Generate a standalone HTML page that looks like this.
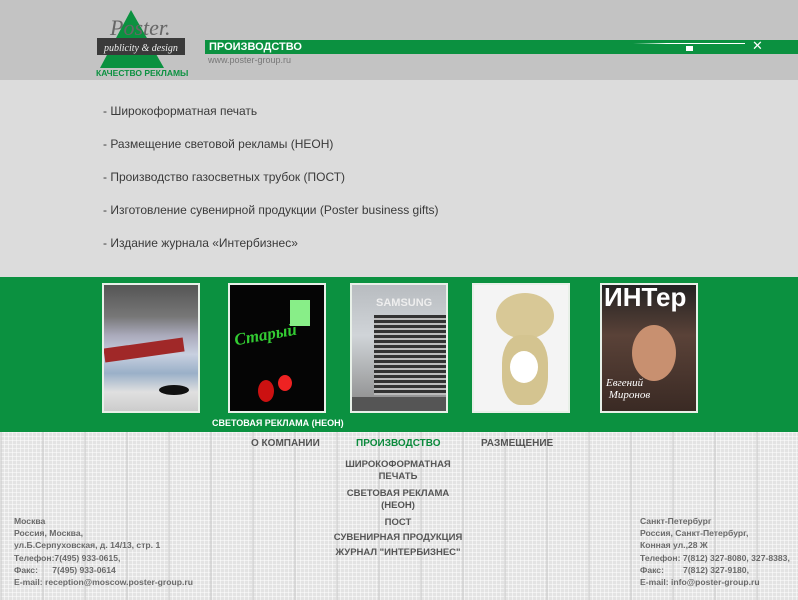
<!DOCTYPE html>
<html><head><meta charset="utf-8"><style>
*{margin:0;padding:0;box-sizing:border-box}
body{width:798px;height:600px;position:relative;overflow:hidden;background:#dcdcdc;font-family:"Liberation Sans",sans-serif}
.a{position:absolute}
#top{left:0;top:0;width:798px;height:80px;background:#c3c3c3}
#bar{left:205px;top:40px;width:593px;height:14px;background:#0b9140;color:#fff;font-weight:bold;font-size:11px;line-height:14px;padding-left:4px}
.list div{position:absolute;left:103px;font-size:12px;color:#3a3a3a}
#green{left:0;top:277px;width:798px;height:155px;background:#0b9140}
.ph{position:absolute;top:283px;width:98px;height:130px;border:2px solid #e8f0e8;overflow:hidden}
#bottom{left:0;top:432px;width:798px;height:168px;background-color:#e3e3e3;
background-image:linear-gradient(90deg,rgba(200,200,200,.5) 2px,transparent 2px),linear-gradient(90deg,rgba(255,255,255,.5) 1px,transparent 1px),linear-gradient(rgba(255,255,255,.5) 1px,transparent 1px);background-size:42px 42px,4px 4px,4px 4px}
.menu{font-weight:bold;font-size:10px;color:#555}
.sub{position:absolute;left:330px;width:136px;text-align:center;font-weight:bold;font-size:9.5px;color:#555;line-height:12px}
.addr{font-weight:bold;font-size:8.6px;color:#6a6a6a;line-height:12.2px}
</style></head><body>
<div class="a" id="top"></div>
<svg class="a" style="left:92px;top:8px" width="100" height="62">
<polygon points="39,2 8,60 72,60" fill="#0b9140"/>
<rect x="5" y="30" width="88" height="17" fill="#3a3a3a"/>
<text x="18" y="27" font-family="Liberation Serif" font-style="italic" font-size="22" fill="#666">Poster.</text>
<text x="12" y="43" font-family="Liberation Serif" font-style="italic" font-size="10" fill="#eee">publicity &amp; design</text>
</svg>
<div class="a" style="left:96px;top:68px;font-size:8.5px;font-weight:bold;color:#0b9140">КАЧЕСТВО РЕКЛАМЫ</div>
<div class="a" id="bar">ПРОИЗВОДСТВО</div>
<div class="a" style="left:633px;top:43px;width:112px;height:1px;background:linear-gradient(90deg,transparent,#fff 30%)"></div>
<div class="a" style="left:686px;top:46px;width:7px;height:5px;background:#fff"></div>
<div class="a" style="left:752px;top:38px;color:#fff;font-size:13px">✕</div>
<div class="a" style="left:208px;top:55px;font-size:9px;color:#777">www.poster-group.ru</div>
<div class="list">
<div style="top:104px">- Широкоформатная печать</div>
<div style="top:137px">- Размещение световой рекламы (НЕОН)</div>
<div style="top:170px">- Производство газосветных трубок (ПОСТ)</div>
<div style="top:203px">- Изготовление сувенирной продукции (Poster business gifts)</div>
<div style="top:236px">- Издание журнала «Интербизнес»</div>
</div>
<div class="a" id="green"></div>
<div class="ph" style="left:102px;background:linear-gradient(#555 0,#777 25%,#aab 40%,#c8d0e0 55%,#9ab0c8 70%,#e0e0e0 85%,#ccc)">
<div class="a" style="left:0;top:58px;width:80px;height:14px;background:#a02828;transform:rotate(-8deg)"></div>
<div class="a" style="left:55px;top:100px;width:30px;height:10px;border-radius:50%;background:#111"></div></div>
<div class="ph" style="left:228px;background:#050505">
<div class="a" style="left:4px;top:40px;color:#3c3;font-family:'Liberation Serif';font-style:italic;font-size:17px;font-weight:bold;transform:rotate(-10deg)">Старый</div>
<div class="a" style="left:60px;top:15px;width:20px;height:26px;background:#8e8"></div>
<div class="a" style="left:28px;top:95px;width:16px;height:22px;border-radius:50%;background:#c11"></div>
<div class="a" style="left:48px;top:90px;width:14px;height:16px;border-radius:50%;background:#e22"></div></div>
<div class="ph" style="left:350px;background:linear-gradient(#b8bcc0,#d0d4d8 40%,#888 100%)">
<div class="a" style="left:22px;top:30px;width:74px;height:80px;background:repeating-linear-gradient(#333 0 3px,#bbb 3px 5px)"></div>
<div class="a" style="left:24px;top:12px;color:#eee;font-weight:bold;font-size:11px">SAMSUNG</div>
<div class="a" style="left:0;top:112px;width:98px;height:18px;background:#555"></div></div>
<div class="ph" style="left:472px;background:#f4f4f4">
<div class="a" style="left:22px;top:8px;width:58px;height:46px;border-radius:50%;background:#d8c896"></div>
<div class="a" style="left:28px;top:50px;width:46px;height:70px;border-radius:40%;background:#d4c490"></div>
<div class="a" style="left:36px;top:66px;width:28px;height:32px;border-radius:50%;background:#fff"></div></div>
<div class="ph" style="left:600px;background:linear-gradient(#222,#5a4238 40%,#3a2a24)">
<div class="a" style="left:2px;top:-3px;color:#fff;font-weight:bold;font-size:26px">ИНТер</div>
<div class="a" style="left:30px;top:40px;width:44px;height:56px;border-radius:50%;background:#c89070"></div>
<div class="a" style="left:4px;top:92px;color:#fff;font-family:'Liberation Serif';font-style:italic;font-size:11px;line-height:12px">Евгений<br>&nbsp;Миронов</div></div>
<div class="a" style="left:212px;top:418px;color:#fff;font-weight:bold;font-size:9px">СВЕТОВАЯ РЕКЛАМА (НЕОН)</div>
<div class="a" id="bottom"></div>
<div class="a menu" style="left:251px;top:438px">О КОМПАНИИ</div>
<div class="a menu" style="left:356px;top:438px;color:#0b8a3c">ПРОИЗВОДСТВО</div>
<div class="a menu" style="left:481px;top:438px">РАЗМЕЩЕНИЕ</div>
<div class="sub" style="top:459px">ШИРОКОФОРМАТНАЯ<br>ПЕЧАТЬ</div>
<div class="sub" style="top:488px">СВЕТОВАЯ РЕКЛАМА<br>(НЕОН)</div>
<div class="sub" style="top:517px">ПОСТ</div>
<div class="sub" style="top:532px">СУВЕНИРНАЯ ПРОДУКЦИЯ</div>
<div class="sub" style="top:547px">ЖУРНАЛ "ИНТЕРБИЗНЕС"</div>
<div class="a addr" style="left:14px;top:515px">Москва<br>Россия, Москва,<br>ул.Б.Серпуховская, д. 14/13, стр. 1<br>Телефон:7(495) 933-0615,<br>Факс:&nbsp;&nbsp;&nbsp;&nbsp;&nbsp;&nbsp;7(495) 933-0614<br>E-mail: reception@moscow.poster-group.ru</div>
<div class="a addr" style="left:640px;top:515px">Санкт-Петербург<br>Россия, Санкт-Петербург,<br>Конная ул.,28 Ж<br>Телефон: 7(812) 327-8080, 327-8383,<br>Факс:&nbsp;&nbsp;&nbsp;&nbsp;&nbsp;&nbsp;&nbsp;&nbsp;7(812) 327-9180,<br>E-mail: info@poster-group.ru</div>
</body></html>
